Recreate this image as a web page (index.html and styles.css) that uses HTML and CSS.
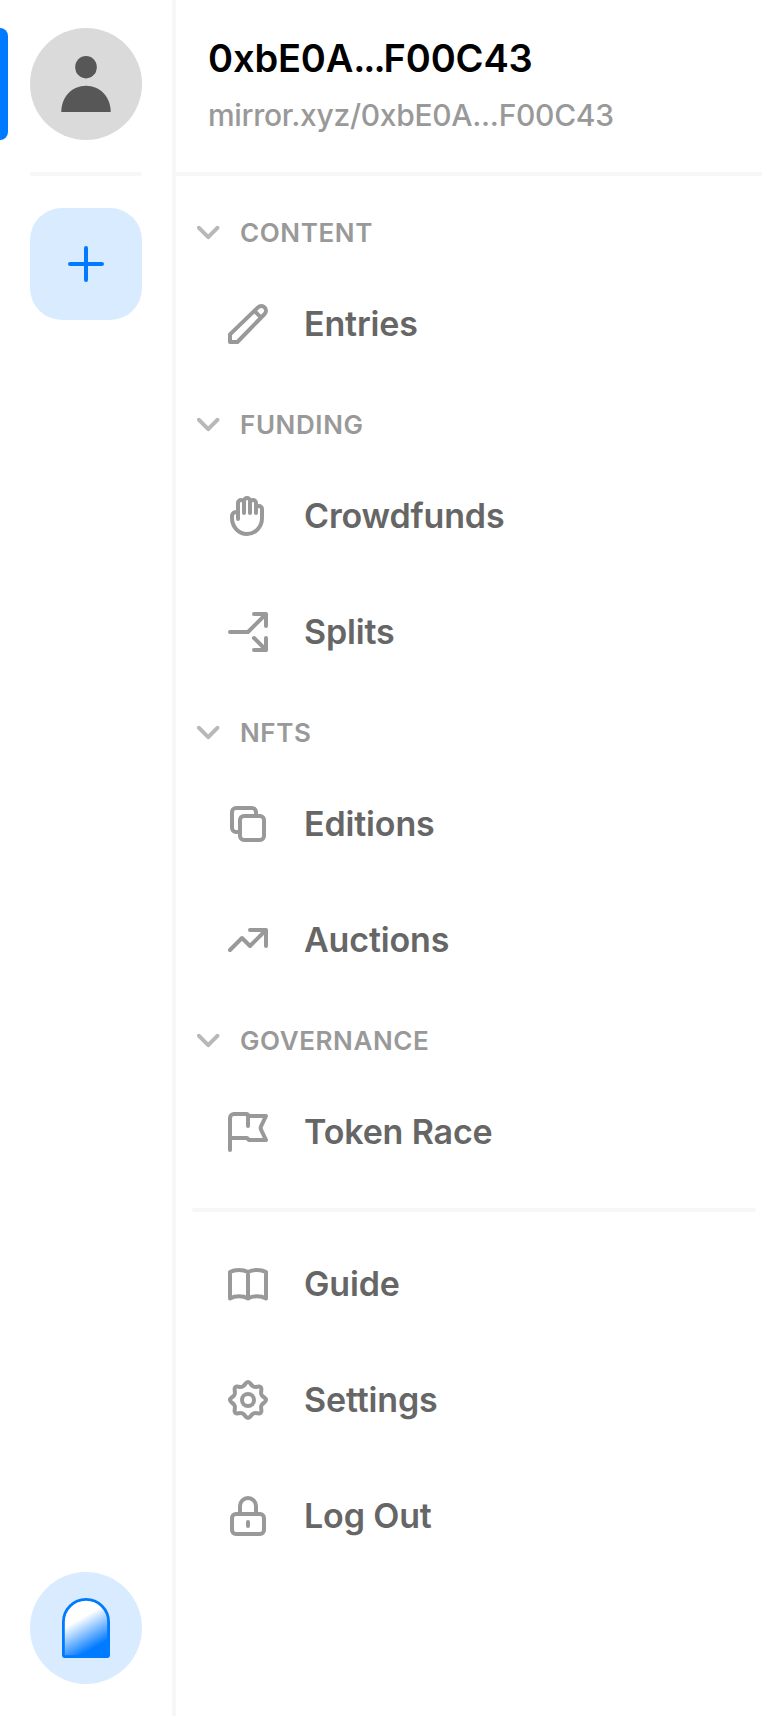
FILE: index.html
```html
<!DOCTYPE html>
<html lang="en">
    <head>
        <meta charset="utf-8">
        <title>Mirror Dashboard</title>
        <link rel="stylesheet" href="styles.css">
    </head>
    <body>
        <div class="app">
            <aside class="rail">
                <a class="avatar" href="#">
                    <svg width="112" height="112" viewBox="0 0 112 112">
                        <ellipse cx="56" cy="39.2" rx="10.8" ry="11.2"/>
                        <path d="M31.3 84C31.3 69 42 57.8 56 57.8S80.7 69 80.7 84Z"/>
                    </svg>
                </a>
                <div class="rail-divider"></div>
                <a class="add" href="#">
                    <svg class="plus" width="48" height="48" viewBox="0 0 24 24"><path d="M12 4v16M4 12h16"/></svg>
                </a>
                <a class="logo" href="#">
                    <svg width="48" height="60" viewBox="0 0 48 60">
                        <defs>
                            <linearGradient id="arch" gradientUnits="userSpaceOnUse" x1="16" y1="22" x2="32" y2="50">
                                <stop offset="0" stop-color="#fff"/>
                                <stop offset="1" stop-color="#007aff"/>
                            </linearGradient>
                        </defs>
                        <path d="M1.4 24a22.6 22.6 0 0 1 45.2 0v33.6a1 1 0 0 1-1 1H2.4a1 1 0 0 1-1-1Z" fill="url(#arch)" stroke="#007aff" stroke-width="2.8"/>
                    </svg>
                </a>
            </aside>

            <main class="panel">
                <header class="header">
                    <h1 class="title">0xbE0A<span class="dots">...</span>F00C43</h1>
                    <p class="url">mirror.xyz/0xbE0A...F00C43</p>
                </header>

                <nav class="nav">
                    <section class="group">
                        <h2 class="heading"><svg class="chevron" width="24" height="16" viewBox="0 0 24 16"><path d="M3 3.8l9.2 9.4 9.2-9.4"/></svg>CONTENT</h2>
                        <a class="item" href="#">
                            <svg class="icon" viewBox="0 0 24 24"><path d="M3 17.2L17 3.700a2.300 2.300 0 0 1 3.300 3.300L6.700 21H3zM15.200 5.400l3 3"/></svg>
                            <span>Entries</span>
                        </a>
                    </section>

                    <section class="group">
                        <h2 class="heading"><svg class="chevron" width="24" height="16" viewBox="0 0 24 16"><path d="M3 3.8l9.2 9.4 9.2-9.4"/></svg>FUNDING</h2>
                        <a class="item" href="#">
                            <svg class="icon" viewBox="0 0 24 24"><path d="M7 13.500V5.500a1.500 1.500 0 0 1 3 0V10.500V4.500a1.500 1.500 0 0 1 3 0V10.500V5.500a1.500 1.500 0 0 1 3 0V10.500V8.500a1.500 1.500 0 0 1 3 0V13a7.500 8 0 0 1-15 0V12a2 2 0 0 1 2-2h1"/></svg>
                            <span>Crowdfunds</span>
                        </a>
                        <a class="item" href="#">
                            <svg class="icon" viewBox="0 0 24 24"><path d="M3 12h9l9-9M15 3h6v6M15 15l6 6M21 15v6h-6"/></svg>
                            <span>Splits</span>
                        </a>
                    </section>

                    <section class="group">
                        <h2 class="heading"><svg class="chevron" width="24" height="16" viewBox="0 0 24 16"><path d="M3 3.8l9.2 9.4 9.2-9.4"/></svg>NFTS</h2>
                        <a class="item" href="#">
                            <svg class="icon" viewBox="0 0 24 24"><rect x="8" y="8" width="12" height="12" rx="2"/><path d="M16 8V6a2 2 0 0 0-2-2H6a2 2 0 0 0-2 2v8a2 2 0 0 0 2 2h2"/></svg>
                            <span>Editions</span>
                        </a>
                        <a class="item" href="#">
                            <svg class="icon" viewBox="0 0 24 24"><path d="M3 17l6-6 4 4 8-8M13 7h8v8"/></svg>
                            <span>Auctions</span>
                        </a>
                    </section>

                    <section class="group">
                        <h2 class="heading"><svg class="chevron" width="24" height="16" viewBox="0 0 24 16"><path d="M3 3.8l9.2 9.4 9.2-9.4"/></svg>GOVERNANCE</h2>
                        <a class="item" href="#">
                            <svg class="icon" viewBox="0 0 24 24"><path d="M3 21V5a2 2 0 0 1 2-2h6.500l1 1H21l-2.500 5.200q-.3.800 0 1.600L21 16h-8.500l-1-1H3M12 3.500V9"/></svg>
                            <span>Token Race</span>
                        </a>
                    </section>

                    <div class="nav-divider"></div>

                    <a class="item" href="#">
                        <svg class="icon" viewBox="0 0 24 24"><path d="M12 6C9.500 4.600 5.500 4.600 3 6V19.200c2.500-1.400 6.500-1.400 9 0 2.500-1.400 6.500-1.400 9 0V6c-2.500-1.400-6.500-1.400-9 0zM12 6V19.200"/></svg>
                        <span>Guide</span>
                    </a>
                    <a class="item" href="#">
                        <svg class="icon" viewBox="-12 -12 24 24">
                            <path d="M0-9C1.300-9 1.300-7.300 2.800-6.700C4.300-6.100 5.440-7.280 6.360-6.360C7.280-5.440 6.100-4.300 6.700-2.800C7.300-1.300 9-1.300 9 0C9 1.300 7.300 1.300 6.700 2.800C6.100 4.300 7.280 5.440 6.360 6.360C5.440 7.280 4.300 6.100 2.800 6.700C1.300 7.300 1.300 9 0 9C-1.300 9-1.300 7.300-2.800 6.700C-4.300 6.100-5.440 7.280-6.360 6.360C-7.280 5.440-6.100 4.300-6.700 2.800C-7.300 1.300-9 1.300-9 0C-9-1.300-7.300-1.300-6.700-2.800C-6.100-4.300-7.280-5.440-6.360-6.360C-5.440-7.280-4.300-6.100-2.800-6.700C-1.300-7.300-1.300-9 0-9Z"/>
                            <circle r="3"/>
                        </svg>
                        <span>Settings</span>
                    </a>
                    <a class="item" href="#">
                        <svg class="icon" viewBox="0 0 24 24"><rect x="4" y="11" width="16" height="10" rx="2"/><path d="M8 11V7a4 4 0 0 1 8 0v4M12 15v2"/></svg>
                        <span>Log Out</span>
                    </a>
                </nav>
            </main>
        </div>
    </body>
</html>
```
FILE: styles.css
```css
* {
    box-sizing: border-box;
}

body {
    margin: 0;
    font-family: Inter, "Liberation Sans", sans-serif;
    background-color: #fff;
}

a {
    color: inherit;
    text-decoration: none;
}

svg {
    display: block;
    flex: none;
}

.app {
    display: flex;
    height: 1716px;
}

/* Left rail */
.rail {
    display: flex;
    flex-direction: column;
    align-items: center;
    flex: none;
    width: 176px;
    padding: 28px 0 32px;
    border-right: 4px solid #f7f7f7;
}

.avatar {
    width: 112px;
    height: 112px;
    border-radius: 50%;
    background-color: #dadada;
    fill: #575757;
}

/* Marks the active account */
.avatar::before {
    content: "";
    position: absolute;
    left: 0;
    width: 8px;
    height: 112px;
    border-radius: 0 8px 8px 0;
    background-color: #007aff;
}

.rail-divider {
    width: 112px;
    height: 4px;
    margin: 32px 0;
    border-radius: 2px;
    background-color: #f7f7f7;
}

.add,
.logo {
    display: flex;
    align-items: center;
    justify-content: center;
    width: 112px;
    height: 112px;
    background-color: #d9ebff;
}

.add {
    border-radius: 32px;
}

.logo {
    margin-top: auto;
    border-radius: 50%;
}

.plus {
    fill: none;
    stroke: #007aff;
    stroke-width: 2;
    stroke-linecap: round;
}

/* Main panel */
.panel {
    flex: 1;
}

.header {
    height: 176px;
    padding: 34px 32px 0;
    border-bottom: 4px solid #f7f7f7;
}

.title {
    margin: 0;
    font-size: 38px;
    font-weight: 600;
    line-height: 48px;
    letter-spacing: -0.15px;
    color: #000;
}

.dots {
    letter-spacing: -2px;
}

.url {
    margin: 11px 0 0;
    font-size: 30px;
    font-weight: 500;
    line-height: 44px;
    letter-spacing: -0.3px;
    color: #999;
}

.nav {
    padding-top: 14px;
}

.group {
    margin-top: 8px;
}

.heading {
    display: flex;
    align-items: center;
    gap: 20px;
    height: 68px;
    margin: 0;
    padding-left: 20px;
    font-size: 26px;
    font-weight: 600;
    letter-spacing: 0.6px;
    color: #999;
}

.chevron {
    fill: none;
    stroke: #b8b8b8;
    stroke-width: 4;
    stroke-linecap: round;
    stroke-linejoin: round;
}

.item {
    display: flex;
    align-items: center;
    gap: 32px;
    height: 116px;
    padding-left: 48px;
    font-size: 34px;
    font-weight: 600;
    letter-spacing: -0.15px;
    color: #666;
}

.item span {
    padding-bottom: 2px;
}

.icon {
    width: 48px;
    height: 48px;
    fill: none;
    stroke: #999;
    stroke-width: 2;
    stroke-linecap: round;
    stroke-linejoin: round;
}

.nav-divider {
    height: 4px;
    margin: 18px 6px 14px 16px;
    border-radius: 2px;
    background-color: #f7f7f7;
}
```
